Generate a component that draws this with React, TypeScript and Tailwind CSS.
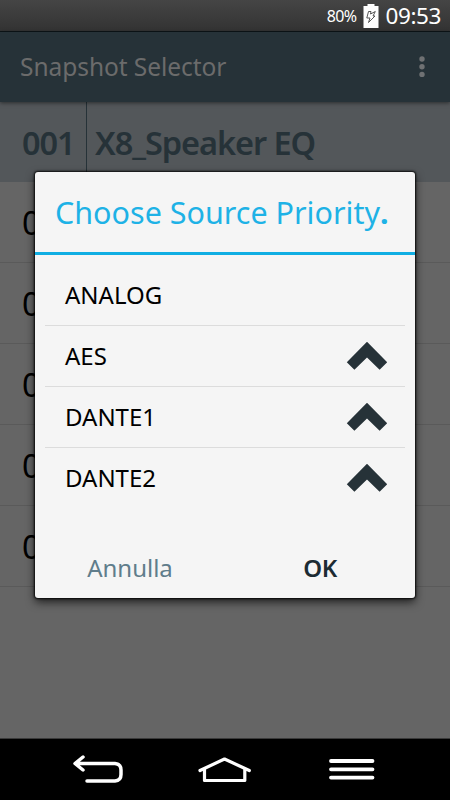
import { useState } from "react";

const snapshots = ["002", "003", "004", "005", "006"];

const Chevron = () => (
  <svg width="42" height="30" viewBox="0 0 42 30" fill="#263238">
    <path d="M21 0.7 L41.2 21.2 L33.6 28.8 L21 16.6 L8.4 28.8 L0.8 21.2 Z" />
  </svg>
);

const StatusBar = () => (
  <div className="h-[32px] shrink-0 flex items-center justify-end bg-linear-to-b from-[#454545] to-[#333333] border-b border-[#0d1518] text-white pr-[9px]">
    <span className="text-[16px] leading-none tracking-[-0.6px] mr-[7px]">80%</span>
    <svg width="16" height="26" viewBox="0 0 16 26" className="mr-[6px]">
      <path d="M4.5 1 H11.5 V3 H15.5 V25 H0.5 V3 H4.5 Z" fill="#fff" />
      <path d="M5.5 8.5 H8 L7.5 11 L12.3 8.5 L10 13 H12 L5.5 19.5 L7 15 H3.8 Z" fill="#fff" stroke="#444" strokeWidth="0.9" />
    </svg>
    <span className="text-[22.5px] leading-none tracking-[-0.4px] pt-[1px]">09:53</span>
  </div>
);

const AppBar = () => (
  <div className="relative z-10 h-[70px] shrink-0 flex items-center justify-between bg-[#263238] pl-[20px] pr-[25px] shadow-[0_1px_4px_rgba(0,0,0,0.5)]">
    <span className="text-[24.5px] leading-none tracking-[-0.05px] text-[#6b6b6b] pt-[1px]">Snapshot Selector</span>
    <svg width="6" height="22" viewBox="0 0 6 22" fill="#6f7173">
      <circle cx="3" cy="3" r="2.7" />
      <circle cx="3" cy="10.8" r="2.7" />
      <circle cx="3" cy="18.4" r="2.7" />
    </svg>
  </div>
);

const NavBar = () => (
  <div className="h-[62px] shrink-0 flex items-center bg-black border-t border-[#3a3a3a]">
    <svg width="450" height="61" viewBox="0 0 450 61" fill="none" stroke="#fff" strokeWidth="3.5" strokeLinecap="round" strokeLinejoin="round">
      <path d="M83 18 L75 24.5 L83 31 M76 24.5 H115 Q121 25 121 31 V35.5 Q121 41.5 115 42 H87" />
      <path d="M200 31.5 L224.5 20 L249.3 31.5 M204.5 30.5 V41.5 H244.8 V30.5" strokeWidth="3.2" />
      <path d="M331 22 H372.5 M331 30.3 H372.5 M331 38.6 H372.5" strokeWidth="3.8" />
    </svg>
  </div>
);

const PriorityDialog = () => {
  const [sources, setSources] = useState(["ANALOG", "AES", "DANTE1", "DANTE2"]);

  const moveUp = (index: number) => {
    setSources((prev) => {
      const next = [...prev];
      [next[index - 1], next[index]] = [next[index], next[index - 1]];
      return next;
    });
  };

  return (
    <div className="w-[380px] h-[426px] flex flex-col bg-[#f5f5f5] rounded-[3px] shadow-[0_0_2px_1px_rgba(0,0,0,0.85),0_4px_10px_rgba(0,0,0,0.7)]">
      <div className="h-[83px] shrink-0 flex items-center pl-[20px] border-b-[3px] border-[#10aee3]">
        <h1 className="text-[30.5px] leading-none text-[#1eb2e6] whitespace-nowrap pt-[1px]">
          Choose Source Priority<span className="font-bold">.</span>
        </h1>
      </div>
      <ul className="px-[10px] pt-[10px]">
        {sources.map((name, i) => (
          <li
            key={name}
            className="h-[61px] flex items-center justify-between pl-[20px] pr-[17px] border-b border-[#dcdcdc] last:border-transparent"
          >
            <span className="text-[24px] leading-none text-black">{name}</span>
            {i > 0 && (
              <button onClick={() => moveUp(i)}>
                <Chevron />
              </button>
            )}
          </li>
        ))}
      </ul>
      <div className="flex-1 flex items-end pb-[17px]">
        <button className="w-1/2 text-[24px] leading-[26px] text-[#607d8b]">Annulla</button>
        <button className="w-1/2 text-[24px] leading-[26px] tracking-[-0.4px] font-semibold text-[#1c2b33]">OK</button>
      </div>
    </div>
  );
};

const App = () => {
  return (
    <div className="relative w-[450px] h-[800px] overflow-hidden flex flex-col bg-[#656565] font-['Noto_Sans','Open_Sans',sans-serif]">
      <StatusBar />
      <AppBar />
      <div className="flex-1 flex flex-col">
        <div className="h-[80px] flex bg-[#53575a] text-[32.5px] leading-[82px] font-semibold tracking-[-1.05px] text-[#263238]">
          <div className="w-[87px] pl-[22px] border-r border-[#263238]">001</div>
          <div className="pl-[8px] whitespace-nowrap">X8_Speaker EQ</div>
        </div>
        {snapshots.map((num) => (
          <div key={num} className="h-[81px] pl-[22px] border-b border-[#5a5a5a] text-[33px] leading-[82px] text-black">
            {num}
          </div>
        ))}
      </div>
      <NavBar />
      <div className="absolute left-[35px] top-[172px] z-20">
        <PriorityDialog />
      </div>
    </div>
  );
};

export default App;
